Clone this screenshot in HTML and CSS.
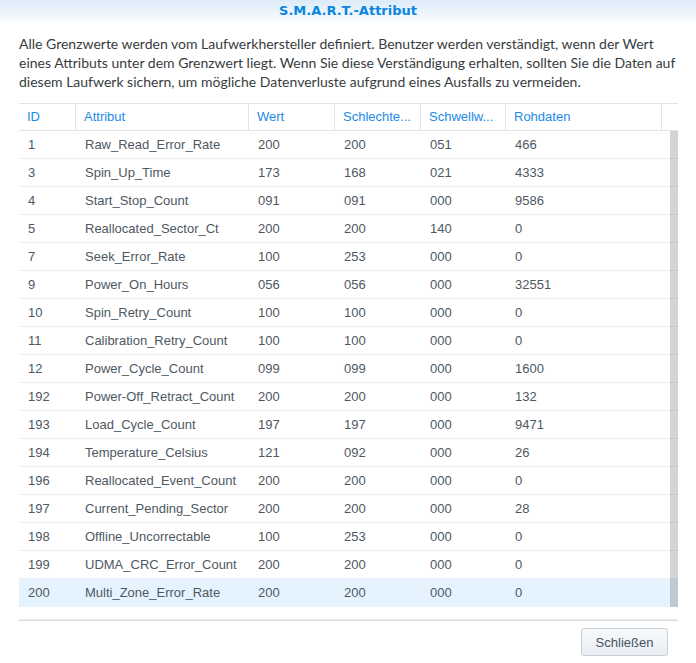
FILE: index.html
```html
<!DOCTYPE html>
<html lang="de">
<head>
    <meta charset="UTF-8">
    <title>S.M.A.R.T.-Attribut</title>
    <link rel="stylesheet" href="styles.css">
</head>
<body>
    <div class="dialog">
        <div class="titlebar">S.M.A.R.T.-Attribut</div>
        <p class="intro">Alle Grenzwerte werden vom Laufwerkhersteller definiert. Benutzer werden verständigt, wenn der Wert eines Attributs unter dem Grenzwert liegt. Wenn Sie diese Verständigung erhalten, sollten Sie die Daten auf diesem Laufwerk sichern, um mögliche Datenverluste aufgrund eines Ausfalls zu vermeiden.</p>

        <div class="grid">
            <div class="grid-head">
                <div class="hcell">ID</div>
                <div class="hcell">Attribut</div>
                <div class="hcell">Wert</div>
                <div class="hcell">Schlechte...</div>
                <div class="hcell">Schwellw...</div>
                <div class="hcell">Rohdaten</div>
                <div class="hcell filler"></div>
            </div>
            <div class="grid-body" id="rows"></div>
            <div class="scrollbar"></div>
        </div>

        <div class="footer">
            <button type="button" class="btn">Schließen</button>
        </div>
    </div>
    <script>
        const data = [
            ['1', 'Raw_Read_Error_Rate', '200', '200', '051', '466'],
            ['3', 'Spin_Up_Time', '173', '168', '021', '4333'],
            ['4', 'Start_Stop_Count', '091', '091', '000', '9586'],
            ['5', 'Reallocated_Sector_Ct', '200', '200', '140', '0'],
            ['7', 'Seek_Error_Rate', '100', '253', '000', '0'],
            ['9', 'Power_On_Hours', '056', '056', '000', '32551'],
            ['10', 'Spin_Retry_Count', '100', '100', '000', '0'],
            ['11', 'Calibration_Retry_Count', '100', '100', '000', '0'],
            ['12', 'Power_Cycle_Count', '099', '099', '000', '1600'],
            ['192', 'Power-Off_Retract_Count', '200', '200', '000', '132'],
            ['193', 'Load_Cycle_Count', '197', '197', '000', '9471'],
            ['194', 'Temperature_Celsius', '121', '092', '000', '26'],
            ['196', 'Reallocated_Event_Count', '200', '200', '000', '0'],
            ['197', 'Current_Pending_Sector', '200', '200', '000', '28'],
            ['198', 'Offline_Uncorrectable', '100', '253', '000', '0'],
            ['199', 'UDMA_CRC_Error_Count', '200', '200', '000', '0'],
            ['200', 'Multi_Zone_Error_Rate', '200', '200', '000', '0']
        ];

        const rows = document.getElementById('rows');
        data.forEach((item, i) => {
            const row = document.createElement('div');
            row.className = 'row' + (i === data.length - 1 ? ' selected' : '');
            item.forEach((value) => {
                const cell = document.createElement('div');
                cell.className = 'cell';
                cell.textContent = value;
                row.appendChild(cell);
            });
            row.appendChild(document.createElement('div'));
            rows.appendChild(row);
        });
    </script>
</body>
</html>
```

FILE: styles.css
```css
body {
    margin: 0;
    font-family: "Liberation Sans", Arial, sans-serif;
    font-size: 13px;
    background: #fff;
}
.dialog {
    width: 696px;
    height: 663px;
}
.titlebar {
    height: 23px;
    line-height: 21px;
    text-align: center;
    font-family: "DejaVu Sans", Verdana, sans-serif;
    font-weight: bold;
    font-size: 13px;
    color: #0a86e0;
    background: linear-gradient(to bottom, #dcebf8, #fbfdff);
}
.intro {
    margin: 11px 19px 12px 19px;
    font-family: Lato, "Liberation Sans", sans-serif;
    font-size: 14px;
    line-height: 19px;
    color: #383c40;
}
.grid {
    position: relative;
    margin-left: 19px;
    width: 659px;
}
.grid-head, .row {
    display: grid;
    grid-template-columns: 57px 173px 86px 86px 85px 156px 16px;
}
.grid-head {
    height: 26px;
    border-top: 1px solid #dde6ee;
    border-bottom: 1px solid #dde6ee;
}
.hcell {
    border-right: 1px solid #dde6ee;
    padding-left: 8px;
    line-height: 26px;
    color: #1c8ae6;
    white-space: nowrap;
    overflow: hidden;
}
.hcell.filler {
    border-right: none;
}
.row {
    height: 27px;
    border-bottom: 1px solid #ebeff3;
}
.row:last-child {
    border-bottom: none;
    height: 28px;
}
.row.selected {
    background: #e5f3fe;
}
.cell {
    padding-left: 9px;
    line-height: 27px;
    color: #4e5862;
    white-space: nowrap;
}
.scrollbar {
    position: absolute;
    right: 0;
    top: 28px;
    bottom: 0;
    width: 8px;
    background: rgba(0, 0, 0, 0.17);
}
.footer {
    margin: 13px 18px 0 19px;
    border-top: 1px solid #dadada;
    box-shadow: 0 -1px 0 #f0f0f0;
    display: flex;
    justify-content: flex-end;
    padding: 7px 10px 0 0;
}
.btn {
    width: 87px;
    height: 28px;
    font-family: "Liberation Sans", Arial, sans-serif;
    font-size: 13px;
    color: #46535f;
    border: 1px solid #c6cfd8;
    border-radius: 3px;
    background: linear-gradient(to bottom, #f8fafc, #e9eef3);
    cursor: pointer;
}
```
